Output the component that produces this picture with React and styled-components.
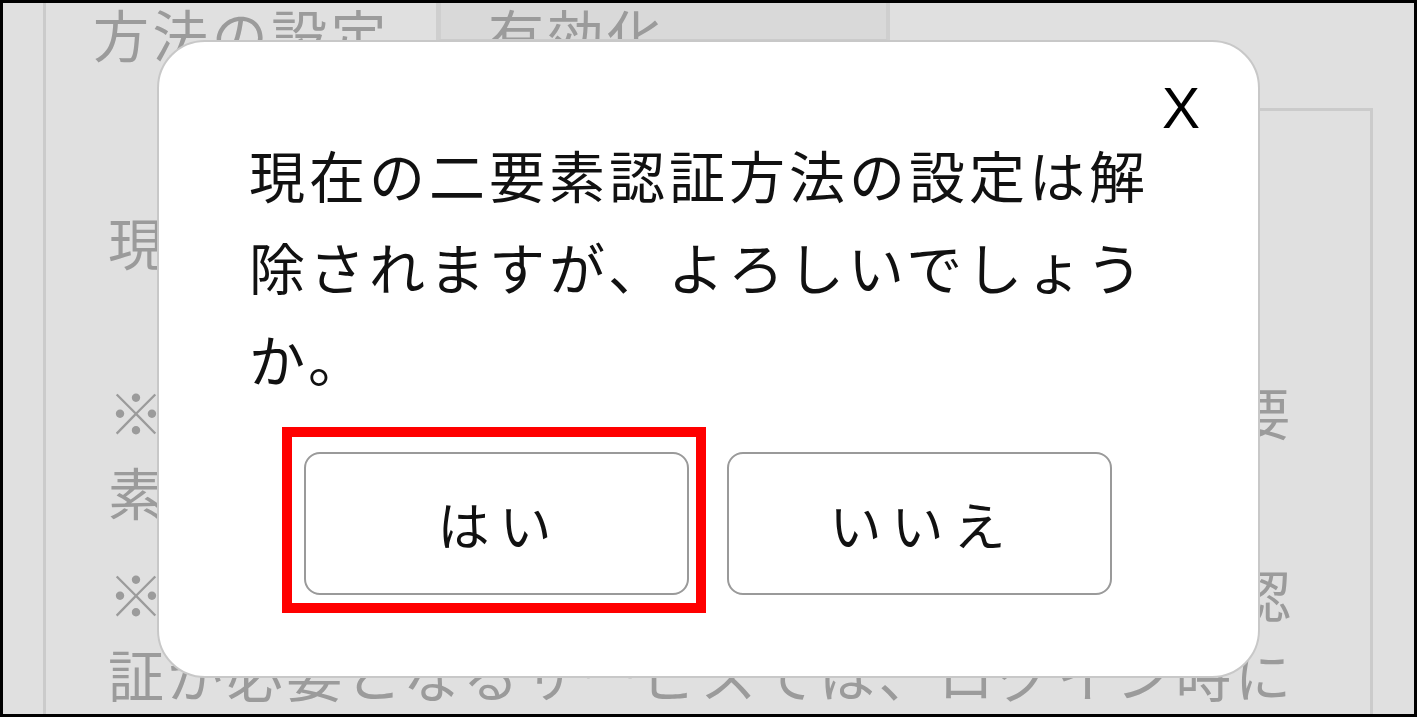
import React from "react";
import styled, { createGlobalStyle } from "styled-components";

const GlobalStyle = createGlobalStyle`
  html, body {
    margin: 0;
    padding: 0;
  }
  body {
    font-family: "Noto Sans CJK JP", "Noto Sans", sans-serif;
  }
`;

const App = () => {
  return (
    <>
      <GlobalStyle />
      <Screen>
        <Column>
          <TabRow>
            <Tab $width={390} $active>
              方法の設定
            </Tab>
            <Tab $width={454}>有効化</Tab>
          </TabRow>
          <Panel>
            <Note $gap={90}>現在の設定：SMS認証</Note>
            <Note $gap={22}>
              ※設定を解除すると、次回ログイン時の二要素認証は行われません。
            </Note>
            <Note>
              ※設定を解除した場合でも、一部の二要素認証が必要となるサービスでは、ログイン時に認証が求められます。
            </Note>
          </Panel>
        </Column>

        <Modal>
          <Close>X</Close>
          <Message>
            現在の二要素認証方法の設定は解除されますが、よろしいでしょうか。
          </Message>
          <Actions>
            <Highlight>
              <ChoiceButton>はい</ChoiceButton>
            </Highlight>
            <ChoiceButton>いいえ</ChoiceButton>
          </Actions>
        </Modal>
      </Screen>
    </>
  );
};

export default App;

const Screen = styled.div`
  position: relative;
  width: 1417px;
  height: 717px;
  box-sizing: border-box;
  border: 3px solid #000;
  background-color: #e0e0e0;
  overflow: hidden;
  display: flex;
  padding-left: 40px;
`;

const Column = styled.div`
  width: 1330px;
  box-sizing: border-box;
  border-left: 3px solid #cbcbcb;
  display: flex;
  flex-direction: column;
`;

const TabRow = styled.div`
  display: flex;
  align-items: flex-start;
  height: 105px;
`;

/* the active tab runs down into the panel and hides its top border */
const Tab = styled.div`
  position: relative;
  z-index: 1;
  width: ${(p) => p.$width}px;
  height: ${(p) => (p.$active ? "108px" : "38px")};
  overflow: hidden;
  padding-left: 47px;
  box-sizing: border-box;
  border-right: ${(p) => (p.$active ? "none" : "4px solid #cfcfcf")};
  border-left: ${(p) => (p.$active ? "none" : "5px solid #cfcfcf")};
  background-color: ${(p) => (p.$active ? "#e0e0e0" : "#d9d9d9")};
  border-bottom: ${(p) => (p.$active ? "none" : "2px solid #cbcbcb")};
  color: #9b9b9b;
  font-size: 56px;
  letter-spacing: 3.4px;
  line-height: 60px;
  white-space: nowrap;
`;

const Panel = styled.div`
  flex: 1;
  border-top: 3px solid #cbcbcb;
  border-right: 3px solid #cbcbcb;
  padding: 90px 65px 0 62px;
`;

const Note = styled.p`
  margin: 0 0 ${(p) => p.$gap || 0}px 0;
  width: 1200px;
  color: #9b9b9b;
  font-size: 56px;
  letter-spacing: 3.4px;
  line-height: 80px;
`;

const Modal = styled.div`
  position: absolute;
  z-index: 2;
  left: 154px;
  top: 37px;
  width: 1103px;
  height: 638px;
  box-sizing: border-box;
  background-color: #fff;
  border: 2px solid #c8c8c8;
  border-radius: 48px;
  padding: 86px 0 0 90px;
`;

const Close = styled.div`
  position: absolute;
  top: 38px;
  right: 58px;
  font-family: "Liberation Sans", Arial, sans-serif;
  font-size: 57px;
  line-height: 57px;
  color: #000;
  cursor: pointer;
`;

const Message = styled.p`
  margin: 0;
  width: 920px;
  color: #111;
  font-size: 56px;
  letter-spacing: 4px;
  line-height: 92px;
`;

const Actions = styled.div`
  display: flex;
  gap: 38px;
  margin: 48px 0 0 55px;
`;

const Highlight = styled.div`
  position: relative;

  &::after {
    content: "";
    position: absolute;
    top: -25px;
    left: -22px;
    right: -17px;
    bottom: -18px;
    border: 10px solid #ff0000;
    pointer-events: none;
  }
`;

const ChoiceButton = styled.button`
  width: 385px;
  height: 143px;
  box-sizing: border-box;
  background-color: #fff;
  border: 2px solid #9a9a9a;
  border-radius: 16px;
  font-family: "Noto Sans CJK JP", sans-serif;
  font-size: 52px;
  letter-spacing: 10px;
  padding: 0 0 0 6px;
  color: #111;
  cursor: pointer;
`;
